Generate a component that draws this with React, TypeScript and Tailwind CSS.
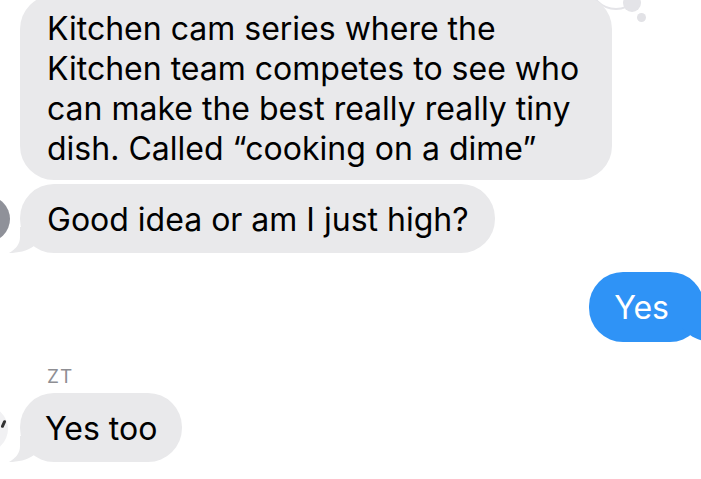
import React from 'react';

const bubble = 'relative rounded-[34px] bg-[#e9e9eb] text-[32px] leading-[40px]';

function LeftTail() {
  return (
    <svg className="absolute left-[-12px] bottom-0" width="34" height="26" viewBox="0 0 34 26">
      <path d="M12 0 L12 10 C12 17 8 22 1 26 C10 26 19 24 26 19 L34 12 L34 0 Z" fill="#e9e9eb" />
    </svg>
  );
}

function RightTail() {
  return (
    <svg className="absolute right-[-12px] bottom-0" width="34" height="26" viewBox="0 0 34 26">
      <path d="M22 0 L22 10 C22 17 26 22 33 26 C24 26 15 24 8 19 L0 12 L0 0 Z" fill="#2f93f6" />
    </svg>
  );
}

export default function App() {
  return (
    <div className="relative w-[701px] h-[479px] overflow-hidden bg-white font-['Inter','Liberation_Sans',sans-serif] text-black">
      {/* tapback remnants peeking in at the top */}
      <div className="absolute left-[571px] top-[-31px] h-[34px] w-[34px] rounded-full bg-[#2f93f6]" />
      <div className="absolute left-[589px] top-[-44px] h-[54px] w-[54px] rounded-full border-2 border-[#e4e4e8] bg-white" />
      <div className="absolute left-[623px] top-[-6px] h-[18px] w-[18px] rounded-full bg-[#e4e4e8]" />
      <div className="absolute left-[637px] top-[13px] h-[9px] w-[9px] rounded-full bg-[#e2e2e6]" />

      <div className="flex flex-col pl-[20px]">
        {/* grouped message, no tail */}
        <div className={`${bubble} mt-[-5px] w-[592px] pl-[27px] pt-[14px] pb-[11px]`}>
          <div className="whitespace-nowrap">Kitchen cam series where the</div>
          <div className="whitespace-nowrap">Kitchen team competes to see who</div>
          <div className="whitespace-nowrap">can make the best really really tiny</div>
          <div className="whitespace-nowrap">dish. Called “cooking on a dime”</div>
        </div>

        <div className="mt-[4px] flex items-end">
          <div className="ml-[-56px] mr-[10px] mb-[11px] h-[46px] w-[46px] shrink-0 rounded-full bg-[#8f9199]" />
          <div className={`${bubble} pl-[27px] pr-[26px] pt-[16px] pb-[13px]`}>
            <LeftTail />
            <span className="relative whitespace-nowrap">Good idea or am I just high?</span>
          </div>
        </div>

        <div className="mt-[19px] flex justify-end">
          <div className="relative mr-[-3px] rounded-[34px] bg-[#2f93f6] pl-[25px] pr-[35px] pt-[16px] pb-[14px] text-[32px] leading-[40px] text-white">
            <RightTail />
            <span className="relative">Yes</span>
          </div>
        </div>

        <div className="mt-[23px] pl-[27px] text-[19px] leading-[24px] tracking-[1px] text-[#8e8e93]">ZT</div>

        <div className="mt-[4px] flex items-end">
          <div className="relative ml-[-58px] mr-[12px] mb-[10px] h-[46px] w-[46px] shrink-0 rounded-full bg-[#f1f1f3]">
            <div className="absolute right-[3px] top-[14px] h-[8px] w-[3px] rotate-[25deg] rounded-sm bg-[#333]" />
          </div>
          <div className={`${bubble} pl-[25px] pr-[25px] pt-[16px] pb-[13px]`}>
            <LeftTail />
            <span className="relative whitespace-nowrap">Yes too</span>
          </div>
        </div>
      </div>
    </div>
  );
}
